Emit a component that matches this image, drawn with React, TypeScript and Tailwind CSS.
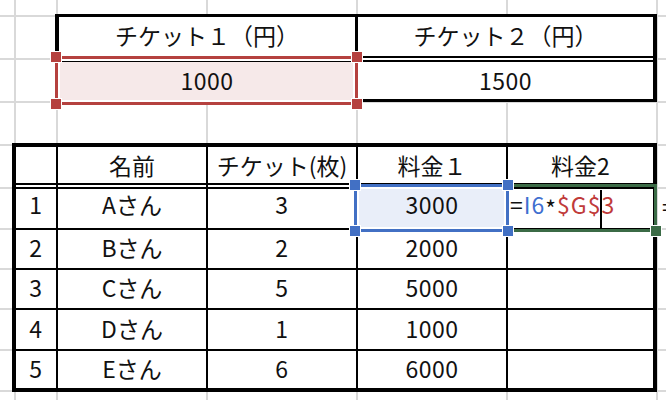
import React from 'react';

// grid tracks of the sheet (gray gridlines are drawn by these cells)
const COL_START = ['col-start-1', 'col-start-2', 'col-start-3', 'col-start-4', 'col-start-5', 'col-start-6', 'col-start-7'];
const ROW_START = ['row-start-1', 'row-start-2', 'row-start-3', 'row-start-4', 'row-start-5', 'row-start-6', 'row-start-7', 'row-start-8', 'row-start-9', 'row-start-10', 'row-start-11'];

const header = ['', '名前', 'チケット(枚)', '料金１', '料金2'];
const rows = [
  ['1', 'Aさん', '3', '3000', ''],
  ['2', 'Bさん', '2', '2000', ''],
  ['3', 'Cさん', '5', '5000', ''],
  ['4', 'Dさん', '1', '1000', ''],
  ['5', 'Eさん', '6', '6000', ''],
];

const Handle = ({ color, pos }: { color: string; pos: string }) => (
  <div className={`absolute w-[12px] h-[12px] border border-white ${color} ${pos}`} />
);

export default function App() {
  return (
    <div className="w-[666px] h-[400px] overflow-hidden bg-white font-['Noto_Sans_CJK_JP',sans-serif] text-[23px] text-[#111]">
      <div className="grid h-[400px] grid-cols-[16px_42px_150px_150px_150px_150px_1fr] grid-rows-[17px_43px_43px_43px_43px_41px_40px_40px_41px_41px_1fr]">
        {ROW_START.map((r, ri) =>
          COL_START.map((c, ci) => (
            <div
              key={`${ri}-${ci}`}
              className={`${r} ${c} border-[#d9d9d9] ${ci < 6 ? 'border-r-2' : ''} ${ri < 10 ? 'border-b-2' : ''} overflow-hidden flex items-center leading-none`}
            >
              {ri === 5 && ci === 6 && <span className="pl-[4px] pb-[4px]">=</span>}
            </div>
          ))
        )}

        {/* チケット単価 */}
        <div className="col-start-3 col-end-7 row-start-2 row-end-4 self-start relative h-[88px] -ml-[3px] mr-[1px] -mt-[3px] bg-white border-t-[3px] border-x-4 border-black flex">
          <div className="w-[299px] flex flex-col">
            <div className="h-[45px] border-r-[3px] border-b-2 border-black shadow-[inset_0_-2px_0_#fff,inset_0_-4px_0_#000] flex items-center justify-center pb-[6px]">
              チケット１（円）
            </div>
            <div className="h-[40px] border-r-[3px] border-black bg-[#f6e9e9] flex items-center justify-center pb-[3px] tracking-[0.5px]">1000</div>
          </div>
          <div className="flex-1 flex flex-col">
            <div className="h-[45px] border-b-2 border-black shadow-[inset_0_-2px_0_#fff,inset_0_-4px_0_#000] flex items-center justify-center pb-[6px]">
              チケット２（円）
            </div>
            <div className="h-[40px] border-b-[3px] border-black flex items-center justify-center pb-[1px] tracking-[0.5px]">1500</div>
          </div>

          <div className="absolute -left-[4px] top-[39px] w-[303px] h-[49px] border-[3px] border-[#b5413f] shadow-[inset_0_0_0_2px_#fff]">
            <Handle color="bg-[#b5413f]" pos="-left-[8px] -top-[8px]" />
            <Handle color="bg-[#b5413f]" pos="-right-[8px] -top-[8px]" />
            <Handle color="bg-[#b5413f]" pos="-left-[8px] -bottom-[8px]" />
            <Handle color="bg-[#b5413f]" pos="-right-[8px] -bottom-[8px]" />
          </div>
        </div>

        {/* 一覧 */}
        <div className="col-start-2 col-end-7 row-start-5 row-end-11 self-start relative h-[249px] -ml-[4px] mr-[1px] -mt-[3px] bg-white border-4 border-black grid grid-cols-[42px_150px_150px_150px_1fr] grid-rows-[42px_41px_40px_40px_41px_1fr]">
          {header.map((h, ci) => (
            <div
              key={`h-${ci}`}
              className={`border-black border-b-2 ${ci < 4 ? 'border-r-2' : ''} shadow-[inset_0_-2px_0_#fff,inset_0_-4px_0_#000] flex items-center justify-center pb-[4px] whitespace-nowrap`}
            >
              {h}
            </div>
          ))}
          {rows.map((row, ri) =>
            row.map((v, ci) => (
              <div
                key={`${ri}-${ci}`}
                className={`border-black ${ci < 4 ? 'border-r-2' : ''} ${ri < 4 ? 'border-b-2' : ''} ${ri === 0 && ci === 3 ? 'bg-[#e9eef9]' : ''} ${ri === 0 ? 'pb-[8px]' : 'pb-[3px]'} ${ci === 0 || ci === 2 || ci === 3 ? 'tracking-[0.5px]' : ''} flex items-center ${ri === 0 && ci === 4 ? 'justify-start pl-[2px]' : 'justify-center'}`}
              >
                {ri === 0 && ci === 4 ? (
                  <span className="whitespace-nowrap flex items-center tracking-[1px]">
                    <span>=</span>
                    <span className="text-[#3f6fd0]">I6</span>
                    <span className="mt-[7px]">*</span>
                    <span className="text-[#c03a3a]">$G$</span>
                    <span className="inline-block w-[2px] h-[38px] bg-black -mx-[1px] mt-[8px]" />
                    <span className="text-[#c03a3a]">3</span>
                  </span>
                ) : (
                  v
                )}
              </div>
            ))
          )}

          <div className="absolute left-[488px] top-[37px] w-[153px] h-[48px] border-[3px] border-[#3b6b46]">
            <Handle color="bg-[#3b6b46]" pos="-right-[8px] -bottom-[8px]" />
          </div>
          <div className="absolute left-[338px] top-[37px] w-[155px] h-[48px] border-[3px] border-[#4270c4] shadow-[inset_0_0_0_2px_#fff]">
            <Handle color="bg-[#4270c4]" pos="-left-[8px] -top-[8px]" />
            <Handle color="bg-[#4270c4]" pos="-right-[8px] -top-[8px]" />
            <Handle color="bg-[#4270c4]" pos="-left-[8px] -bottom-[8px]" />
            <Handle color="bg-[#4270c4]" pos="-right-[8px] -bottom-[8px]" />
          </div>
        </div>
      </div>
    </div>
  );
}
